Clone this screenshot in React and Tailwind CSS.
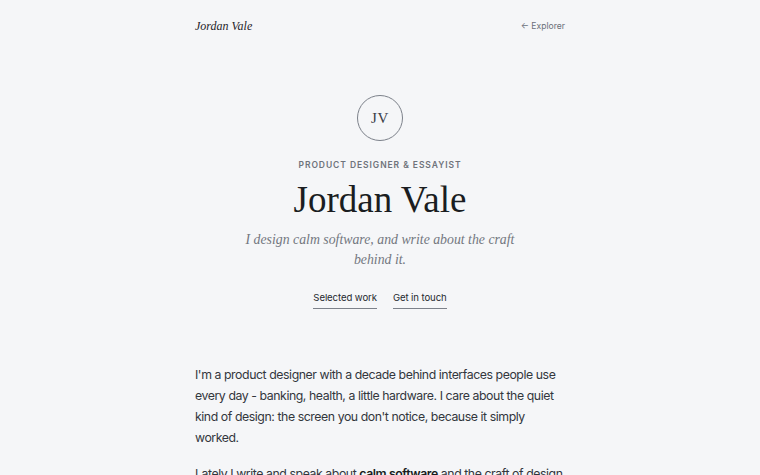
export default function App() {
  const serif = { fontFamily: '"Liberation Serif", "DejaVu Serif", serif' };
  return (
    <div className="min-h-screen bg-[#f5f6f8] text-[#1f2328]" style={{ fontFamily: 'Inter, "Liberation Sans", sans-serif' }}>
      <div className="mx-auto w-[370px]">
        <header className="flex items-center justify-between pt-[17px]">
          <span className="text-[12px] italic text-[#1f2328]" style={serif}>Jordan Vale</span>
          <a className="text-[8.6px] text-[#6b7079]">← Explorer</a>
        </header>

        <section className="mt-[60px] flex flex-col items-center text-center">
          <div className="flex h-[46px] w-[46px] items-center justify-center rounded-full border border-[#7c818a]">
            <span className="text-[15px] tracking-[0.05em] text-[#3b4048]" style={serif}>JV</span>
          </div>
          <p className="mt-[18px] text-[8.5px] font-semibold uppercase tracking-[0.11em] text-[#6f737b]">
            Product Designer &amp; Essayist
          </p>
          <h1 className="mt-[6px] text-[37px] leading-[44px] text-[#1a1d21]" style={serif}>Jordan Vale</h1>
          <p className="mt-[8px] w-[300px] text-[13.8px] italic leading-[20px] text-[#73777f]" style={serif}>
            I design calm software, and write about the craft behind it.
          </p>
          <nav className="mt-[21px] flex gap-[16px] text-[9.6px] tracking-[-0.01em] text-[#25292f]">
            <a className="border-b border-[#7c818a] pb-[3px]">Selected work</a>
            <a className="border-b border-[#7c818a] pb-[3px]">Get in touch</a>
          </nav>
        </section>

        <section className="mt-[55px] text-[12.3px] leading-[21px] tracking-[-0.035em] text-[#33373d]">
          <p>
            I'm a product designer with a decade behind interfaces people use every day - banking, health, a little hardware. I care about the quiet kind of design: the screen you don't notice, because it simply worked.
          </p>
          <p className="mt-[15px]">
            Lately I write and speak about <strong className="font-semibold text-[#1a1d21]">calm software</strong> and the craft of design systems that stay out of the way.
          </p>
        </section>
      </div>
    </div>
  );
}
